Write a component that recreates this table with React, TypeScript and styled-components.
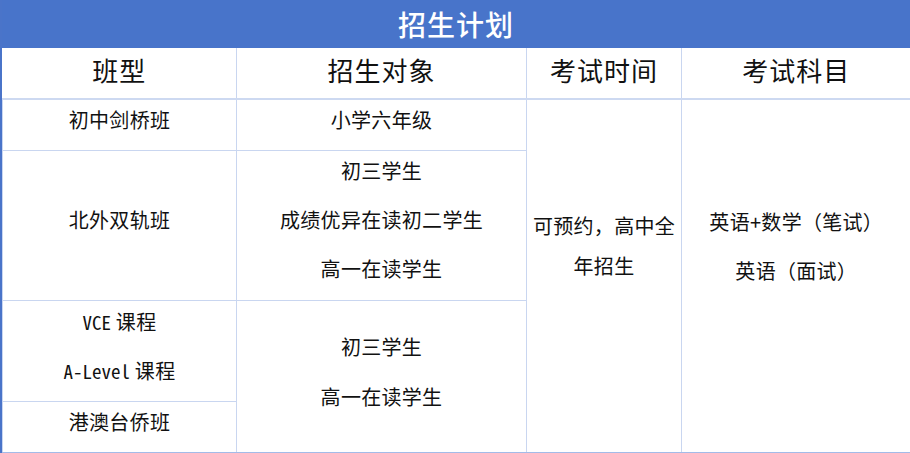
import styled, { createGlobalStyle } from 'styled-components'

const GlobalStyle = createGlobalStyle`
  html, body {
    margin: 0;
    padding: 0;
    background: #ffffff;
  }
  body {
    font-family: "Noto Sans CJK SC", "Noto Sans", sans-serif;
    color: #111111;
  }
`

const Wrapper = styled.div`
  width: 910px;
  border-left: 2px solid #4a74c9;
  box-sizing: border-box;
`

const TitleBar = styled.div`
  height: 48px;
  background: #4874ca;
  color: #ffffff;
  font-size: 28px;
  font-weight: 500;
  letter-spacing: 1px;
  display: flex;
  align-items: center;
  justify-content: center;
`

const Table = styled.table`
  width: 100%;
  border-collapse: collapse;
  table-layout: fixed;
  border-top: hidden;
  border-right: hidden;
  border-bottom: 2px solid #a3bbe8;
`

const HeadCell = styled.th`
  height: 51px;
  padding: 0 0 6px;
  box-sizing: border-box;
  font-size: 26px;
  font-weight: 400;
  line-height: 36px;
  letter-spacing: 1px;
  text-align: center;
  vertical-align: middle;
  border-right: 1px solid #c9d6f0;
  border-bottom: 2px solid #cdd9f1;
`

const Cell = styled.td<{ $lift: number; $gap?: number }>`
  padding: 0 4px ${p => p.$lift}px;
  font-size: 20px;
  line-height: 40px;
  letter-spacing: 0.3px;
  text-align: center;
  vertical-align: middle;
  border: 1px solid #c9d6f0;
  & > div + div {
    margin-top: ${p => p.$gap ?? 9}px;
  }
`

const Row = styled.tr<{ $h: number }>`
  height: ${p => p.$h}px;
`

const Line = styled.div``

const Latin = styled.span`
  font-family: "Noto Sans Mono CJK SC", "DejaVu Sans Mono", monospace;
  font-size: 19px;
  letter-spacing: 0;
`

export default function App() {
  return (
    <>
      <GlobalStyle />
      <Wrapper>
        <TitleBar>招生计划</TitleBar>
        <Table>
          <colgroup>
            <col style={{ width: 234 }} />
            <col style={{ width: 290 }} />
            <col style={{ width: 155 }} />
            <col style={{ width: 229 }} />
          </colgroup>
          <thead>
            <tr>
              <HeadCell>班型</HeadCell>
              <HeadCell>招生对象</HeadCell>
              <HeadCell>考试时间</HeadCell>
              <HeadCell>考试科目</HeadCell>
            </tr>
          </thead>
          <tbody>
            <Row $h={51}>
              <Cell $lift={9}>初中剑桥班</Cell>
              <Cell $lift={9}>小学六年级</Cell>
              <Cell rowSpan={4} $lift={59}>
                可预约，高中全年招生
              </Cell>
              <Cell rowSpan={4} $lift={58}>
                <Line>英语+数学（笔试）</Line>
                <Line>英语（面试）</Line>
              </Cell>
            </Row>
            <Row $h={149}>
              <Cell $lift={11}>北外双轨班</Cell>
              <Cell $lift={11}>
                <Line>初三学生</Line>
                <Line>成绩优异在读初二学生</Line>
                <Line>高一在读学生</Line>
              </Cell>
            </Row>
            <Row $h={101}>
              <Cell $lift={8}>
                <Line><Latin>VCE</Latin> 课程</Line>
                <Line><Latin>A-Level</Latin> 课程</Line>
              </Cell>
              <Cell rowSpan={2} $lift={9} $gap={10}>
                <Line>初三学生</Line>
                <Line>高一在读学生</Line>
              </Cell>
            </Row>
            <Row $h={50}>
              <Cell $lift={10}>港澳台侨班</Cell>
            </Row>
          </tbody>
        </Table>
      </Wrapper>
    </>
  )
}
